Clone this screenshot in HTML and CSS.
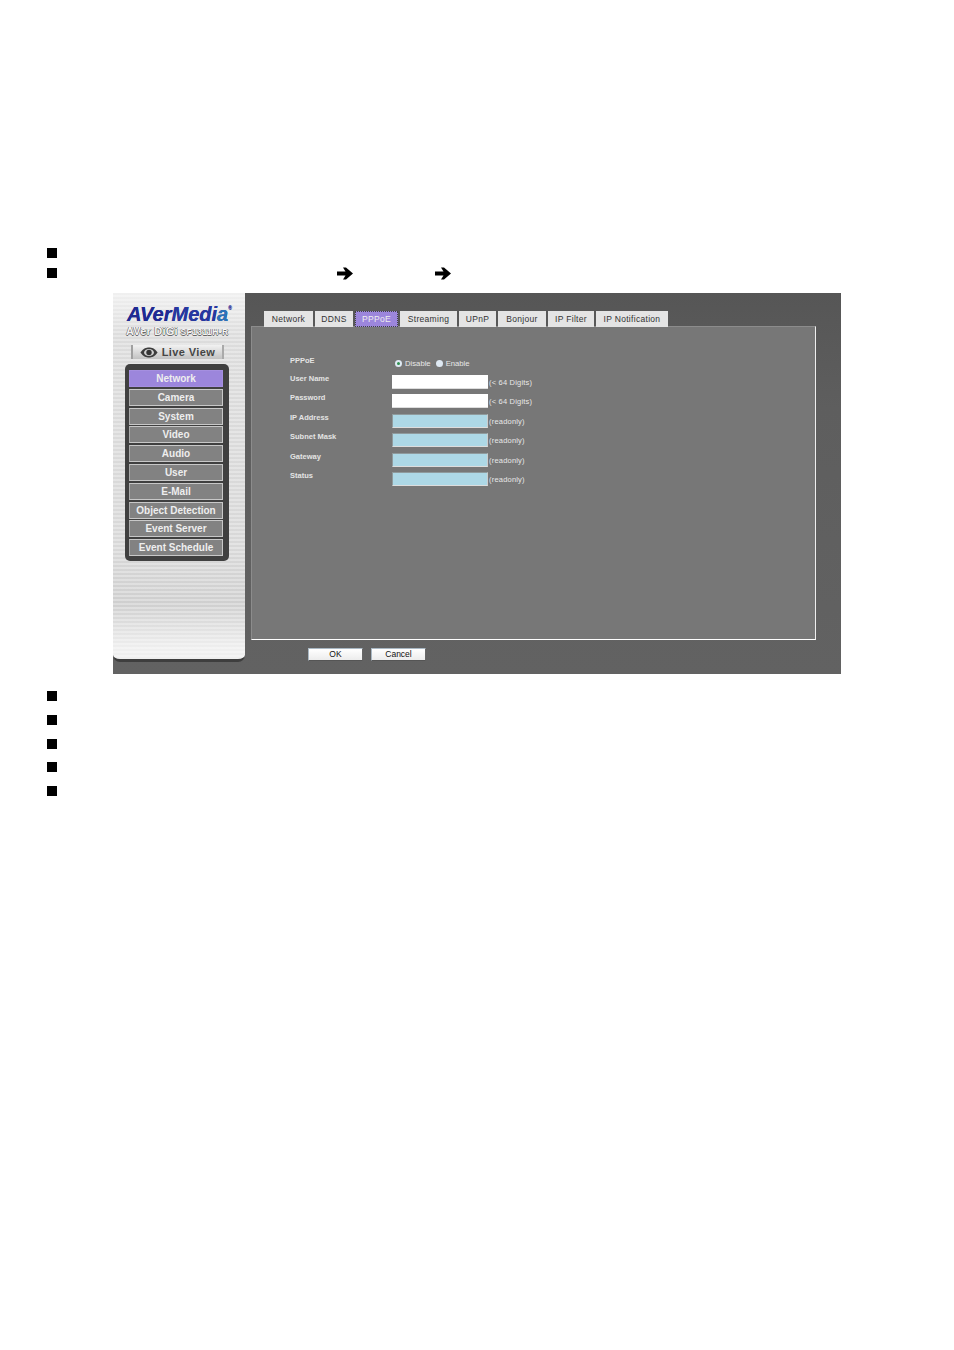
FILE: index.html
```html
<!DOCTYPE html>
<html lang="en">
<head>
    <meta charset="UTF-8">
    <title>PPPoE Settings</title>
    <link rel="stylesheet" href="styles.css">
</head>
<body>
    <div class="page">
        <div class="bullet-row first"><span class="bullet"></span></div>
        <div class="bullet-row second">
            <span class="bullet"></span>
            <svg class="arrow arrow-one" viewBox="0 0 16 13"><path d="M0 4.5H8.5L6 0.5H9L16 6.5L9 12.5H6L8.5 8.5H0Z"/></svg>
            <svg class="arrow arrow-two" viewBox="0 0 16 13"><path d="M0 4.5H8.5L6 0.5H9L16 6.5L9 12.5H6L8.5 8.5H0Z"/></svg>
        </div>

        <div class="screen">
            <div class="sidebar">
                <div class="logo">AVer<span class="logo-media">Medi<span class="logo-a">a</span></span><sup>®</sup></div>
                <div class="model"><span class="model-name">AVer DiGi</span> SF1311H-R</div>
                <div class="live-view">
                    <svg class="eye" viewBox="0 0 20 12">
                        <path d="M0.5 6C4 1 7 0.5 10 0.5S16 1 19.5 6C16 11 13 11.5 10 11.5S4 11 0.5 6Z" fill="#3c3c3c"/>
                        <ellipse cx="10" cy="6" rx="5.5" ry="4" fill="#cfcfcf"/>
                        <circle cx="10" cy="6" r="3" fill="#333"/>
                    </svg>
                    Live View
                </div>
                <div class="menu">
                    <div class="menu-item active">Network</div>
                    <div class="menu-item">Camera</div>
                    <div class="menu-item">System</div>
                    <div class="menu-item">Video</div>
                    <div class="menu-item">Audio</div>
                    <div class="menu-item">User</div>
                    <div class="menu-item">E-Mail</div>
                    <div class="menu-item">Object Detection</div>
                    <div class="menu-item">Event Server</div>
                    <div class="menu-item">Event Schedule</div>
                </div>
            </div>

            <div class="main">
                <div class="tabs">
                    <div class="tab">Network</div>
                    <div class="tab">DDNS</div>
                    <div class="tab active">PPPoE</div>
                    <div class="tab">Streaming</div>
                    <div class="tab">UPnP</div>
                    <div class="tab">Bonjour</div>
                    <div class="tab">IP Filter</div>
                    <div class="tab">IP Notification</div>
                </div>
                <div class="panel">
                    <div class="form">
                        <div class="label">PPPoE</div>
                        <div class="radios">
                            <span class="radio checked"></span><span class="radio-text">Disable</span>
                            <span class="radio"></span><span class="radio-text">Enable</span>
                        </div>
                        <div class="hint"></div>

                        <div class="label">User Name</div>
                        <div class="field"></div>
                        <div class="hint">(&lt; 64 Digits)</div>

                        <div class="label">Password</div>
                        <div class="field"></div>
                        <div class="hint">(&lt; 64 Digits)</div>

                        <div class="label">IP Address</div>
                        <div class="field readonly"></div>
                        <div class="hint">(readonly)</div>

                        <div class="label">Subnet Mask</div>
                        <div class="field readonly"></div>
                        <div class="hint">(readonly)</div>

                        <div class="label">Gateway</div>
                        <div class="field readonly"></div>
                        <div class="hint">(readonly)</div>

                        <div class="label">Status</div>
                        <div class="field readonly"></div>
                        <div class="hint">(readonly)</div>
                    </div>
                </div>
                <div class="buttons">
                    <div class="button">OK</div>
                    <div class="button">Cancel</div>
                </div>
            </div>
        </div>

        <div class="bullet-list">
            <span class="bullet"></span>
            <span class="bullet"></span>
            <span class="bullet"></span>
            <span class="bullet"></span>
            <span class="bullet"></span>
        </div>
    </div>
</body>
</html>
```

FILE: styles.css
```css
body {
    margin: 0;
    background: #fff;
    font-family: "Liberation Sans", Arial, sans-serif;
}
.page {
    height: 1350px;
    padding-top: 243px;
    box-sizing: border-box;
    overflow: hidden;
}
.bullet {
    display: block;
    width: 10px;
    height: 10px;
    background: #000;
}
.bullet-row {
    display: flex;
    align-items: center;
    height: 20px;
    padding-left: 47px;
}
.arrow {
    width: 16px;
    height: 13px;
    fill: #000;
}
.arrow-one {
    margin-left: 280px;
}
.arrow-two {
    margin-left: 82px;
}

/* screenshot */
.screen {
    display: flex;
    width: 728px;
    height: 381px;
    margin: 10px 0 0 113px;
    background: linear-gradient(#565656, #5e5e5e 30%, #626262);
}
.sidebar {
    width: 132px;
    height: 369px;
    flex-shrink: 0;
    box-sizing: border-box;
    padding-top: 12px;
    border-radius: 0 0 7px 7px;
    border-bottom: 3px solid #3e3e3e;
    background:
        repeating-linear-gradient(#0000 0, #0000 2px, rgba(255,255,255,0.3) 2px, rgba(255,255,255,0.3) 4px),
        linear-gradient(#f0f0f0, #dcdcdc 12%, #d8d8d8 70%, #cfcfcf 85%, #efefef 97%);
}
.logo {
    height: 19px;
    padding-left: 14px;
    font-size: 20px;
    line-height: 19px;
    font-weight: bold;
    font-style: italic;
    color: #1f2a92;
    white-space: nowrap;
    text-shadow: 0 0 0.5px #1f2a92;
}
.logo-media {
    color: #27389f;
}
.logo-a {
    color: #2a74b8;
}
.logo sup {
    font-size: 5px;
    line-height: 0;
    font-style: normal;
    vertical-align: 11px;
}
.model {
    height: 12px;
    margin-top: 1px;
    padding-left: 13px;
    font-size: 8.5px;
    line-height: 12px;
    font-weight: bold;
    letter-spacing: 0.4px;
    color: #f4f4f4;
    text-shadow: 0.5px 0 0 #666, -0.5px 0 0 #666, 0 0.5px 0 #666, 0 -0.5px 0 #666;
    white-space: nowrap;
}
.model-name {
    font-size: 11px;
    letter-spacing: 0.2px;
}
.live-view {
    display: flex;
    align-items: center;
    justify-content: center;
    gap: 4px;
    width: 93px;
    height: 14px;
    margin: 8px 0 0 18px;
    box-sizing: border-box;
    border-left: 2px solid #a0a0a0;
    border-right: 2px solid #aaa;
    background: linear-gradient(#f2f2f2, #c2c2c2);
    font-size: 11px;
    font-weight: bold;
    letter-spacing: 0.4px;
    color: #454545;
}
.eye {
    width: 18px;
    height: 11px;
}
.menu {
    display: flex;
    flex-direction: column;
    gap: 1.8px;
    width: 104px;
    height: 197px;
    margin: 5px 0 0 12px;
    box-sizing: border-box;
    padding: 6px 6px 0 4px;
    border-radius: 5px;
    background: #404040;
}
.menu-item {
    height: 17px;
    flex-shrink: 0;
    box-sizing: border-box;
    border: 1px solid #c8c8c8;
    border-left-color: #aaa;
    background: #828282;
    text-align: center;
    font-size: 10px;
    line-height: 15px;
    font-weight: bold;
    color: #eee;
}
.menu-item.active {
    border-color: #a58fe0;
    background: #9c86dc;
}

/* right side */
.main {
    flex: 1;
    padding: 18px 0 0 6px;
}
.tabs {
    display: grid;
    grid-template-columns: 49px 38px 43px 57px 37px 48px 46px 72px;
    gap: 2px;
    height: 15px;
    margin-left: 13px;
}
.tab {
    background: #e4e4e4;
    text-align: center;
    font-size: 8.5px;
    line-height: 16px;
    letter-spacing: 0.3px;
    color: #333;
    white-space: nowrap;
}
.tab.active {
    box-sizing: border-box;
    border: 1px dotted #444;
    background: #9c86dc;
    line-height: 14px;
    color: #eee;
}
.panel {
    width: 565px;
    height: 314px;
    box-sizing: border-box;
    padding: 25px 0 0 38px;
    border-right: 1px solid #eee;
    border-bottom: 1px solid #fff;
    border-left: 1px solid #8c8c8c;
    border-top: 1px solid #8c8c8c;
    background: #777;
}
.form {
    display: grid;
    grid-template-columns: 102px 97px auto;
    grid-auto-rows: 19.5px;
    justify-content: start;
}
.label {
    font-size: 7.5px;
    line-height: 13px;
    font-weight: bold;
    color: #e4e4e4;
}
.label:first-child {
    line-height: 18px;
}
.radios {
    display: flex;
    align-items: center;
    height: 19px;
    padding: 3px 0 0 3px;
    box-sizing: border-box;
    white-space: nowrap;
    font-size: 7.7px;
    color: #e8e8e8;
}
.radio {
    width: 7px;
    height: 7px;
    flex-shrink: 0;
    box-sizing: border-box;
    border-radius: 50%;
    background: #dfe9f3;
}
.radio.checked {
    border: 2px solid #dfe9f3;
    background: #2f8f4f;
}
.radio-text {
    margin: 0 5px 0 3px;
}
.field {
    width: 96px;
    height: 14px;
    margin-top: 3px;
    box-sizing: border-box;
    background: #fff;
    border-bottom: 1px solid #ddd;
}
.field.readonly {
    border: 1px solid #8f9a9c;
    border-right-color: #ccc;
    border-bottom-color: #ddd;
    background: #add8e6;
}
.hint {
    padding-top: 1px;
    font-size: 7.5px;
    line-height: 19px;
    letter-spacing: 0.2px;
    color: #e8e8e8;
    white-space: nowrap;
}
.buttons {
    display: flex;
    gap: 8px;
    margin: 8px 0 0 57px;
}
.button {
    width: 55px;
    height: 13px;
    box-sizing: border-box;
    border: 1px solid #a9b8c4;
    border-right-color: #666;
    border-bottom-color: #555;
    background: linear-gradient(#fff, #ececec);
    text-align: center;
    font-size: 8.5px;
    line-height: 11px;
    color: #111;
}

.bullet-list {
    display: flex;
    flex-direction: column;
    gap: 13.8px;
    margin: 17px 0 0 47px;
}
```
